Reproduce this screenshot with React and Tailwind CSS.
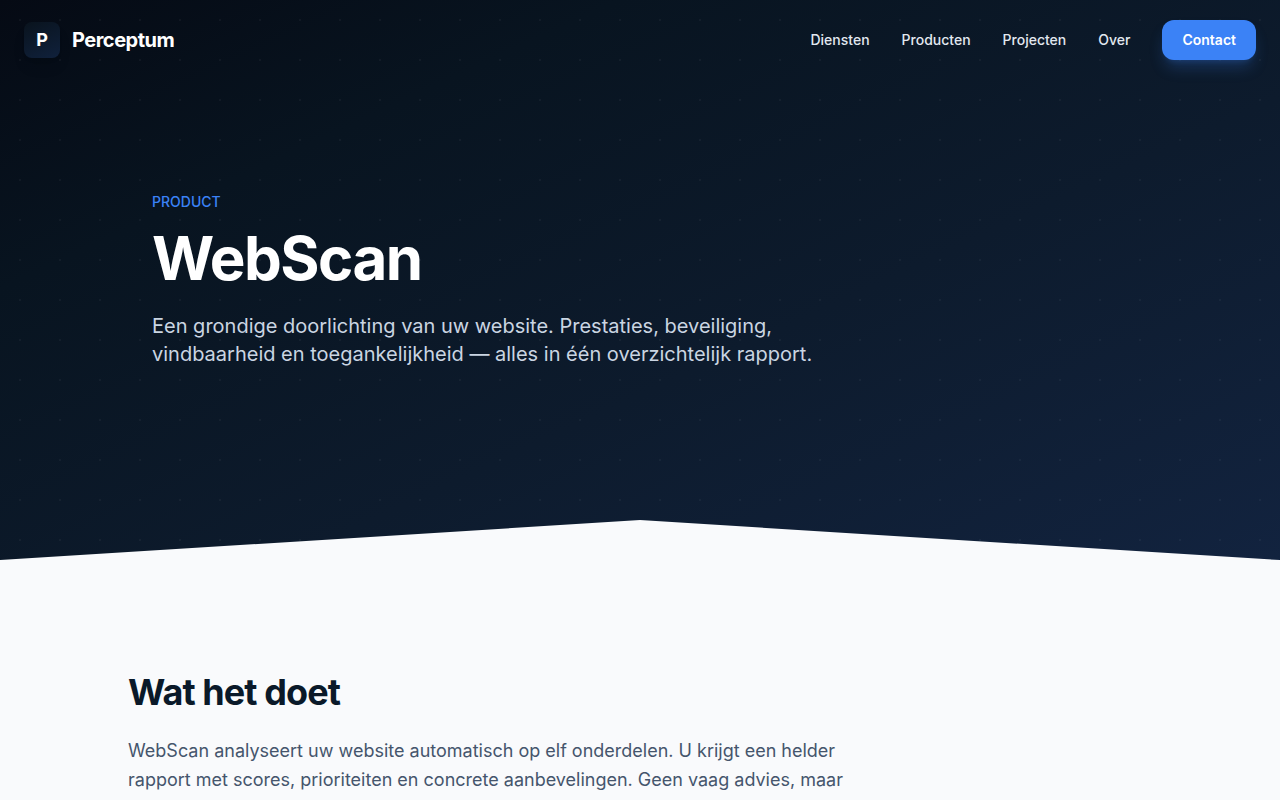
import React from 'react';

const navLinks = [
    { label: 'Diensten', href: '#diensten' },
    { label: 'Producten', href: '#producten' },
    { label: 'Projecten', href: '#projecten' },
    { label: 'Over', href: '#over' },
];

const Header = () => (
    <header className="relative flex h-20 items-center justify-between px-6">
        <a href="#home" className="flex items-center gap-3">
            <span className="flex h-9 w-9 items-center justify-center rounded-lg bg-[linear-gradient(155deg,#09131d,#10213c)] text-lg font-bold text-white shadow-lg shadow-black/10">
                P
            </span>
            <span className="text-xl font-bold tracking-tight text-white">Perceptum</span>
        </a>

        <nav className="flex items-center gap-8">
            {navLinks.map((link) => (
                <a key={link.label} href={link.href} className="text-sm font-medium text-slate-200 hover:text-white">
                    {link.label}
                </a>
            ))}
            <a
                href="#contact"
                className="rounded-xl bg-[#3b82f6] px-5 py-2.5 text-sm font-semibold text-white shadow-lg shadow-[#3b82f6]/25 hover:bg-blue-600"
            >
                Contact
            </a>
        </nav>
    </header>
);

const Hero = () => (
    <div className="bg-[linear-gradient(155deg,#050a14_0%,#081420_25%,#0d1b2d_60%,#12233f_100%)]">
        <div className="bg-[radial-gradient(circle_at_center,rgba(255,255,255,0.04)_1px,transparent_1px)] bg-size-[40px_40px]">
            <Header />
            <section className="mx-auto max-w-5xl px-6 pt-28 pb-38">
                <p className="text-sm font-medium text-[#3b82f6] uppercase">Product</p>
                <h1 className="mt-4 text-6xl font-bold tracking-tight text-white">WebScan</h1>
                <p className="mt-6 max-w-2xl text-xl text-slate-300">
                    Een grondige doorlichting van uw website. Prestaties, beveiliging, vindbaarheid en
                    toegankelijkheid — alles in één overzichtelijk rapport.
                </p>
            </section>
            <svg className="block h-10 w-full" viewBox="0 0 1280 40" preserveAspectRatio="none" aria-hidden="true">
                <path d="M0 40 L640 0 L1280 40 Z" fill="#f9fafc" />
            </svg>
        </div>
    </div>
);

const About = () => (
    <section className="px-6 py-28">
        <div className="mx-auto max-w-5xl">
            <h2 className="text-4xl font-bold tracking-tight text-[#0a1929]">Wat het doet</h2>
            <p className="mt-6 max-w-3xl text-lg leading-relaxed text-slate-600">
                WebScan analyseert uw website automatisch op elf onderdelen. U krijgt een helder rapport met
                scores, prioriteiten en concrete aanbevelingen. Geen vaag advies, maar
            </p>
        </div>
    </section>
);

const App = () => (
    <main className="min-h-screen bg-[#f9fafc] font-['Inter',sans-serif]">
        <Hero />
        <About />
    </main>
);

export default App;
